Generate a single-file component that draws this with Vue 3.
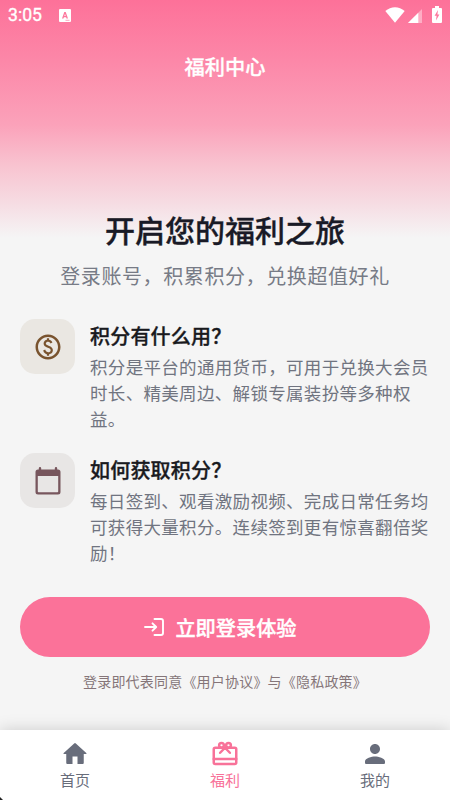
<script setup>
const features = [
  {
    key: 'usage',
    title: '积分有什么用？',
    lines: ['积分是平台的通用货币，可用于兑换大会员', '时长、精美周边、解锁专属装扮等多种权', '益。'],
  },
  {
    key: 'earn',
    title: '如何获取积分？',
    lines: ['每日签到、观看激励视频、完成日常任务均', '可获得大量积分。连续签到更有惊喜翻倍奖', '励！'],
  },
]
const tabs = [
  { label: '首页', icon: 'M10 20v-6h4v6h4.2c.5 0 .8-.3.8-.8V12h1.7c.46 0 .68-.57.33-.87L12.67 3.6a1 1 0 0 0-1.34 0l-8.36 7.53c-.34.3-.13.87.33.87H5v7.2c0 .5.3.8.8.8z' },
  { label: '福利', active: true },
  { label: '我的', icon: 'M12 12c2.21 0 4-1.79 4-4s-1.79-4-4-4-4 1.79-4 4 1.79 4 4 4zm0 2c-2.67 0-8 1.34-8 4v1c0 .55.45 1 1 1h14c.55 0 1-.45 1-1v-1c0-2.66-5.33-4-8-4z' },
]
</script>

<template>
  <div class="screen">
    <header class="status">
      <span class="time">3:05</span>
      <svg class="keyboard" viewBox="0 0 12 13">
        <path fill="#fff" fill-rule="evenodd" d="M1 0h10a1 1 0 0 1 1 1v11a1 1 0 0 1-1 1H1a1 1 0 0 1-1-1V1a1 1 0 0 1 1-1zM5.3 3 3 9.5h1.5l.4-1.3h2.2l.4 1.3H9L6.7 3zM6 4.8l.7 2.2H5.3z" />
        <path stroke="#fb7fa3" stroke-width=".7" d="M6.5 11.3h4" />
      </svg>
      <span class="spacer"></span>
      <svg class="wifi" viewBox="0 0 20 16"><path fill="#fff" d="M.3 4C6-1.1 14-1.1 19.7 4L10 15.8z" /></svg>
      <svg class="signal" viewBox="0 0 14 14"><path fill="#fff" opacity=".4" d="M14 0v14H0z" /><path fill="#fff" d="M10.3 3.7V14H0z" /></svg>
      <svg class="battery" viewBox="0 0 10 17">
        <path fill="#fff" fill-rule="evenodd" d="M3 0h4v2h2a1 1 0 0 1 1 1v13a1 1 0 0 1-1 1H1a1 1 0 0 1-1-1V3a1 1 0 0 1 1-1h2zM6 4 2.6 9.7h2L4 14.5l3.4-6.1h-2z" />
      </svg>
    </header>
    <h1 class="page-title">福利中心</h1>

    <main class="content">
      <h2 class="headline">开启您的福利之旅</h2>
      <p class="subtitle">登录账号，积累积分，兑换超值好礼</p>

      <section class="features">
        <article v-for="f in features" :key="f.key" class="feature">
          <div class="tile" :class="f.key">
            <svg v-if="f.key === 'usage'" class="tile-icon" viewBox="0 0 24 24">
              <path fill="currentColor" d="M12 2C6.48 2 2 6.48 2 12s4.48 10 10 10 10-4.48 10-10S17.52 2 12 2zm0 18c-4.41 0-8-3.59-8-8s3.59-8 8-8 8 3.59 8 8-3.59 8-8 8zm.89-8.9c-1.78-.59-2.64-.96-2.64-1.9 0-1.02 1.11-1.39 1.81-1.39 1.31 0 1.79.99 1.9 1.34l1.58-.67c-.15-.44-.82-1.91-2.66-2.23V5h-1.75v1.26c-2.6.56-2.62 2.85-2.62 2.96 0 2.27 2.25 2.91 3.35 3.31 1.58.56 2.28 1.07 2.28 2.03 0 1.13-1.05 1.61-1.98 1.61-1.82 0-2.34-1.87-2.4-2.09l-1.66.67c.63 2.19 2.28 2.78 3.02 2.96V19h1.75v-1.24c.52-.09 3.02-.59 3.02-3.22.01-1.39-.6-2.61-3-3.44z" />
            </svg>
            <svg v-else class="tile-icon calendar" viewBox="0 0 26 28">
              <path fill="currentColor" fill-rule="evenodd" d="M5 0a1.2 1.2 0 0 1 1.2 1.2v1.3h13.6V1.2a1.2 1.2 0 0 1 2.4 0v1.3H23a2.5 2.5 0 0 1 2.5 2.5v20a2.5 2.5 0 0 1-2.5 2.5H3A2.5 2.5 0 0 1 .5 25V5A2.5 2.5 0 0 1 3 2.5h.8V1.2A1.2 1.2 0 0 1 5 0zM2.8 9v15.5c0 .4.3.7.7.7h19c.4 0 .7-.3.7-.7V9z" />
            </svg>
          </div>
          <div class="copy">
            <h3 class="feature-title">{{ f.title }}</h3>
            <p class="description"><span v-for="line in f.lines" :key="line" class="line">{{ line }}</span></p>
          </div>
        </article>
      </section>

      <button class="login">
        <svg class="login-icon" viewBox="0 0 20 18">
          <path fill="none" stroke="#fff" stroke-width="1.9" stroke-linecap="round" stroke-linejoin="round" d="M1 9h11M8.5 5.3 12.2 9l-3.7 3.7M10.5 1H17a2 2 0 0 1 2 2v12a2 2 0 0 1-2 2h-6.5" />
        </svg>
        <span class="login-label">立即登录体验</span>
      </button>
      <p class="terms">登录即代表同意《用户协议》与《隐私政策》</p>
    </main>

    <nav class="tabbar">
      <a v-for="tab in tabs" :key="tab.label" class="tab" :class="{ active: tab.active }">
        <svg class="tab-icon" viewBox="0 0 24 24">
          <path v-if="tab.icon" fill="currentColor" :d="tab.icon" />
          <g v-else fill="none" stroke="currentColor" stroke-width="2" stroke-linecap="round">
            <rect x="3" y="7" width="18" height="13" rx="1.2" />
            <path d="M3 16h18M12 7 8.1 11M12 7l3.9 4" />
            <circle cx="9.2" cy="5" r="1.9" />
            <circle cx="14.8" cy="5" r="1.9" />
          </g>
        </svg>
        <span class="tab-label">{{ tab.label }}</span>
      </a>
    </nav>
    <svg class="corner" viewBox="0 0 3 3"><path fill="#222" d="M0 0 3 3H0z" /></svg>
  </div>
</template>

<style>
body { margin: 0; }
</style>

<style scoped>
.screen {
  position: relative;
  display: flex;
  flex-direction: column;
  width: 450px;
  height: 800px;
  overflow: hidden;
  background: linear-gradient(#fd7199 0, #fc87a8 60px, #fba2ba 125px, #f8c3d0 165px, #f6dce3 203px, #f5f5f5 238px);
  font-family: "Noto Sans CJK SC", sans-serif;
}
h1, h2, h3, p { margin: 0; }
.status {
  display: flex;
  align-items: center;
  height: 31px;
  padding: 0 8px;
  box-sizing: border-box;
}
.time { font: 400 17.6px/33px Roboto, sans-serif; -webkit-text-stroke: .35px; color: #fff; width: 51px; }
.keyboard { width: 12px; height: 13px; }
.spacer { flex: 1; }
.wifi { width: 20px; height: 16px; margin-right: 3px; margin-top: -1px; }
.signal { width: 14px; height: 14px; margin-right: 10px; margin-top: 1px; }
.battery { width: 10px; height: 17px; margin-top: -2px; }
.page-title {
  height: 70px;
  color: #fff;
  font-size: 20.2px;
  font-weight: 500;
  line-height: 71px;
  text-align: center;
  -webkit-text-stroke: .3px;
}
.content { flex: 1; padding: 105.5px 20px 0; }
.headline {
  color: #191a26;
  font-size: 30px;
  font-weight: 500;
  line-height: 44px;
  text-align: center;
  -webkit-text-stroke: .35px;
}
.subtitle {
  margin-top: 10px;
  color: #777b86;
  font-size: 20px;
  letter-spacing: .6px;
  line-height: 30px;
  text-align: center;
}
.features {
  display: grid;
  gap: 17px;
  margin-top: 28px;
}
.feature { display: flex; gap: 15px; height: 117px; }
.tile {
  display: flex;
  flex: none;
  align-items: center;
  justify-content: center;
  width: 55px;
  height: 55px;
  border-radius: 15px;
}
.usage { background: #eae7e2; color: #79532e; }
.earn { background: #e8e6e5; color: #77565d; }
.tile-icon { width: 30px; height: 30px; margin-top: 1px; }
.calendar { width: 26px; height: 28px; }
.feature-title {
  color: #191a1e;
  font-size: 20px;
  font-weight: 500;
  letter-spacing: .2px;
  line-height: 34px;
  white-space: nowrap;
  -webkit-text-stroke: .35px;
}
.description { padding-top: 1px; color: #707480; font-size: 17.5px; letter-spacing: .32px; }
.line { display: block; height: 26.2px; line-height: 26.2px; white-space: nowrap; }
.login {
  display: flex;
  align-items: center;
  justify-content: center;
  gap: 11px;
  width: 410px;
  height: 60px;
  margin-top: 27.5px;
  padding: 0 9px 0 0;
  border: 0;
  border-radius: 30px;
  background: #fb7299;
  color: #fff;
  font: 500 20.2px/60px "Noto Sans CJK SC", sans-serif;
}
.login-label { padding-top: 2px; -webkit-text-stroke: .35px; }
.login-icon { width: 20px; height: 18px; }
.terms {
  margin-top: 13px;
  color: #857579;
  font-size: 14px;
  letter-spacing: .2px;
  line-height: 22px;
  text-align: center;
}
.tabbar {
  display: flex;
  flex: none;
  height: 70px;
  background: #fff;
  box-shadow: 0 0 15px rgba(0, 0, 0, .17);
}
.tab {
  display: flex;
  flex: 1;
  flex-direction: column;
  align-items: center;
  padding-top: 9px;
  color: #686d7b;
}
.active { color: #f87299; }
.tab-icon { width: 30px; height: 30px; }
.tab-label { font-size: 15px; line-height: 22px; }
.corner { position: absolute; bottom: 0; left: 0; width: 3px; height: 3px; }
</style>
